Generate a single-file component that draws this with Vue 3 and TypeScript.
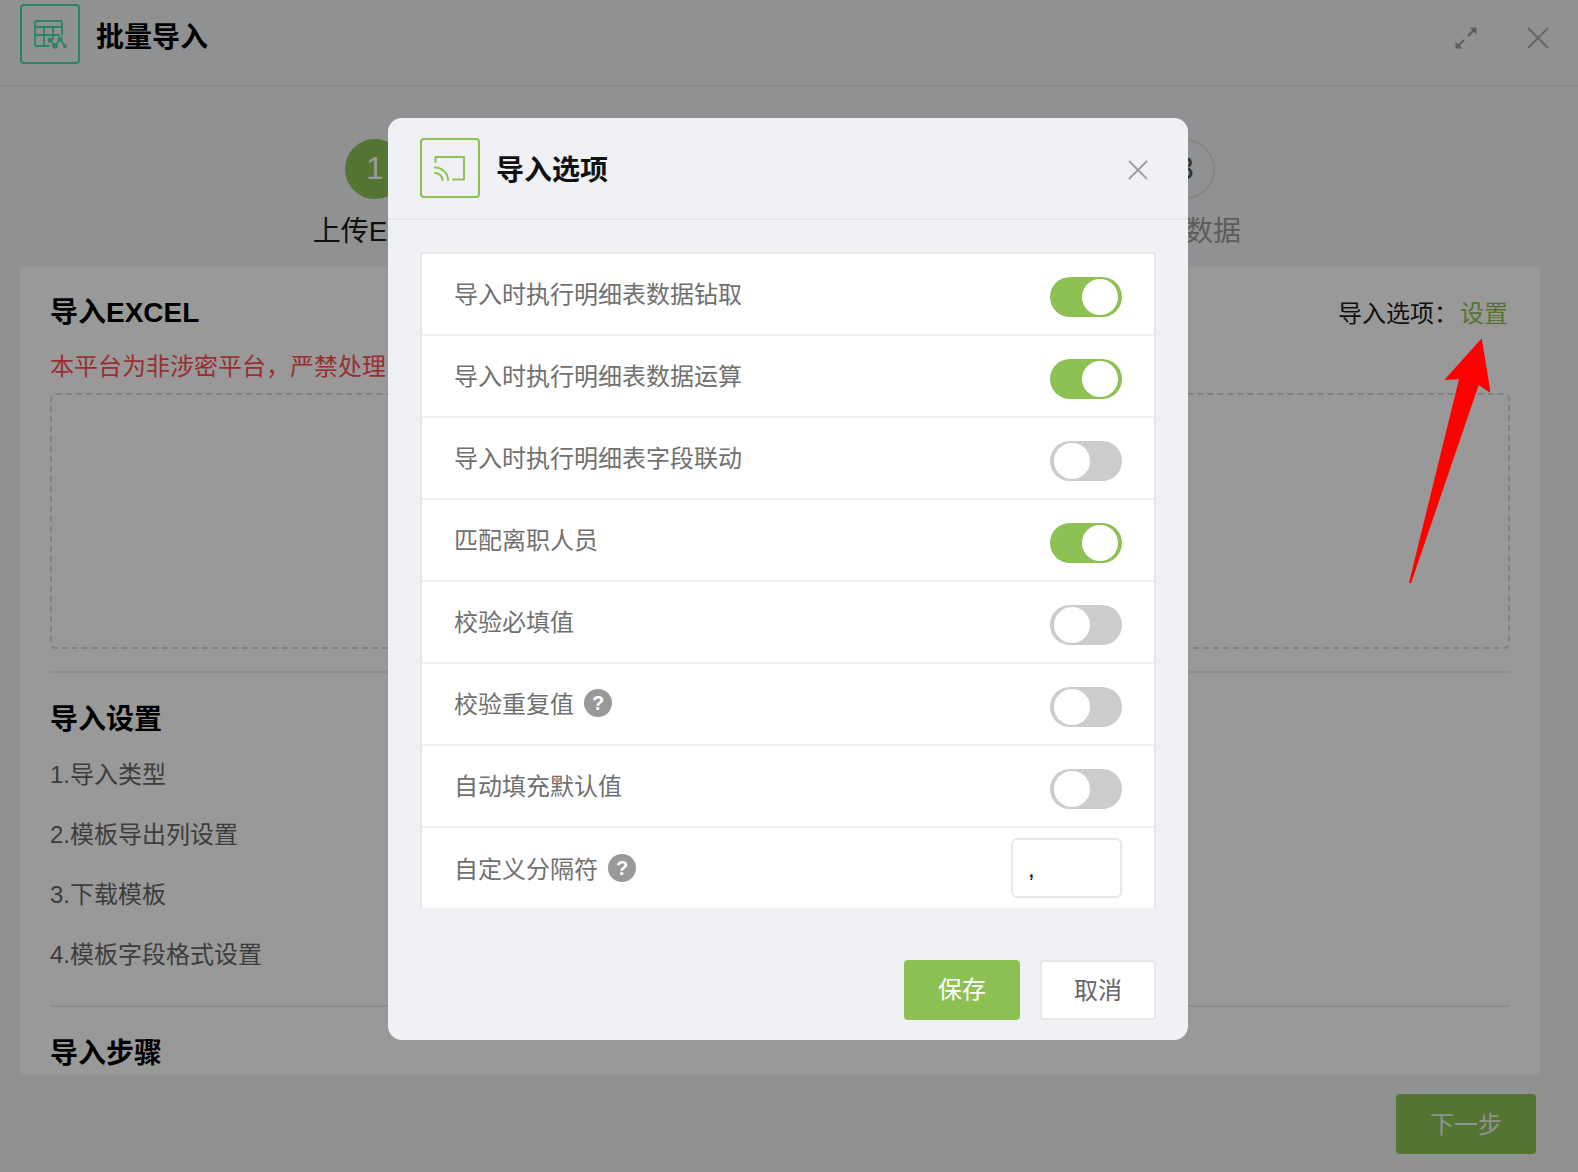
<script setup lang="ts">
interface Row { label: string; on?: boolean; help?: boolean; input?: boolean }
const rows: Row[] = [
  { label: '导入时执行明细表数据钻取', on: true },
  { label: '导入时执行明细表数据运算', on: true },
  { label: '导入时执行明细表字段联动', on: false },
  { label: '匹配离职人员', on: true },
  { label: '校验必填值', on: false },
  { label: '校验重复值', on: false, help: true },
  { label: '自动填充默认值', on: false },
  { label: '自定义分隔符', help: true, input: true },
]
const steps = ['上传Excel', '预览数据', '导入数据']
const settings = ['1.导入类型', '2.模板导出列设置', '3.下载模板', '4.模板字段格式设置']
</script>

<template>
  <div class="page">
    <header class="top">
      <div class="logo">
        <svg width="52" height="52" viewBox="0 0 52 52" fill="none" stroke="#47dba9" stroke-width="1.8" stroke-linecap="round" stroke-linejoin="round">
          <path d="M25 38H13a2 2 0 0 1-2-2V15a2 2 0 0 1 2-2h23a2 2 0 0 1 2 2v12" />
          <path d="M11 19h27M11 27h24M20 19v19M29 19v12" />
          <path d="M26 32l5 6 5-7 5 7" />
          <circle cx="26" cy="32" r="1.6" />
          <circle cx="31" cy="38" r="1.8" />
          <circle cx="36" cy="31" r="1.6" />
          <circle cx="41" cy="38" r="1" />
        </svg>
      </div>
      <h1 class="top-title">批量导入</h1>
      <div class="top-tools">
        <svg width="22" height="22" viewBox="0 0 22 22" fill="none" stroke="#9a9a9a" stroke-width="2.2">
          <path d="M3 19l6-6M13 9l6-6" />
          <path d="M.5 21.500v-7l7 7zM21.500.5v7l-7-7z" fill="#9a9a9a" stroke="none" />
        </svg>
        <svg width="22" height="22" viewBox="0 0 22 22" stroke="#a9a9a9" stroke-width="2">
          <path d="M1 1l20 20M21 1L1 21" />
        </svg>
      </div>
    </header>

    <div class="steps">
      <div v-for="(s, i) in steps" :key="s" class="step">
        <span class="dot" :class="{ active: i === 0 }">{{ i + 1 }}</span>
        <span class="step-label" :class="{ done: i === 0 }">{{ s }}</span>
      </div>
    </div>

    <section class="panel">
      <div class="panel-head">
        <h2 class="h2">导入EXCEL</h2>
        <div class="opt">导入选项：<a class="link">设置</a></div>
      </div>
      <p class="warn">本平台为非涉密平台，严禁处理</p>
      <div class="drop"></div>
      <div class="rule"></div>
      <h2 class="h2 h2-set">导入设置</h2>
      <ul class="set-list">
        <li v-for="s in settings" :key="s">{{ s }}</li>
      </ul>
      <div class="rule rule-2"></div>
      <h2 class="h2 h2-step">导入步骤</h2>
    </section>

    <footer class="foot">
      <button class="next">下一步</button>
    </footer>

    <div class="mask">
      <div class="modal">
        <div class="modal-head">
          <div class="modal-logo">
            <svg width="52" height="52" viewBox="0 0 52 52" fill="none" stroke="#8dc153" stroke-width="2" stroke-linecap="round" stroke-linejoin="round">
              <path d="M11.5 20v-5H40v22.5H29" />
              <path d="M11 25.5c7 0 13 5.500 13 12.500M11 31c4 0 7.500 3 7.500 7" />
            </svg>
          </div>
          <h3 class="modal-title">导入选项</h3>
          <svg class="modal-close" width="22" height="22" viewBox="0 0 22 22" stroke="#a0a0a0" stroke-width="2">
            <path d="M2 2l18 18M20 2L2 20" />
          </svg>
        </div>
        <div class="modal-body">
          <div class="list">
            <div v-for="r in rows" :key="r.label" class="row">
              <span class="row-label">{{ r.label }}</span>
              <span v-if="r.help" class="help">?</span>
              <span v-if="r.input" class="sep">,</span>
              <span v-else class="switch" :class="{ on: r.on }"><i class="knob"></i></span>
            </div>
          </div>
        </div>
        <div class="modal-foot">
          <button class="btn save">保存</button>
          <button class="btn cancel">取消</button>
        </div>
      </div>
      <svg class="arrow" width="90" height="250" viewBox="0 0 90 250">
        <polygon points="81.7,3.3 44.300,45 59,44.300 9,247.700 11,248.300 78.700,50 90.700,58.300" fill="#ff0000" />
      </svg>
    </div>
  </div>
</template>

<style scoped>
.page {
  position: relative;
  width: 1578px;
  height: 1172px;
  overflow: hidden;
  background: #f0f2f5;
  font-family: "Liberation Sans", "Noto Sans CJK SC", sans-serif;
  color: #1a1a1a;
}
.top {
  display: flex;
  align-items: center;
  height: 87px;
  padding: 0 20px 17px;
  box-sizing: border-box;
  border-bottom: 2px solid #e6e6e6;
}
.logo {
  width: 60px;
  height: 60px;
  box-sizing: border-box;
  border: 2px solid #47dba9;
  border-radius: 4px;
  display: flex;
  align-items: center;
  justify-content: center;
}
.top-title {
  margin: 2px 0 0 16px;
  font-size: 28px;
  font-weight: 700;
  color: #000;
}
.top-tools {
  margin-left: auto;
  display: flex;
  align-items: center;
  gap: 50px;
  padding: 7px 9px 0 0;
}
.steps {
  display: grid;
  grid-template-columns: repeat(3, 405px);
  justify-content: start;
  height: 180px;
  padding: 52px 0 0 172.5px;
  box-sizing: border-box;
}
.step {
  display: flex;
  flex-direction: column;
  align-items: center;
}
.dot {
  width: 60px;
  height: 60px;
  padding-bottom: 2px;
  box-sizing: border-box;
  border-radius: 50%;
  border: 2px solid #dcdcdc;
  display: flex;
  align-items: center;
  justify-content: center;
  font-size: 32px;
  color: #555;
}
.dot.active {
  background: #8dc153;
  border-color: #8dc153;
  color: #fff;
}
.step-label {
  margin-top: 16px;
  font-size: 28px;
  line-height: 34px;
  color: #999;
}
.step-label.done {
  color: #1a1a1a;
}
.panel {
  height: 807px;
  margin: 0 38px 0 20px;
  padding: 27px 30px 0;
  box-sizing: border-box;
  background: #fff;
  overflow: hidden;
}
.panel-head {
  display: flex;
  align-items: center;
  justify-content: space-between;
  height: 38px;
}
.h2 {
  margin: 0;
  font-size: 28px;
  line-height: 38px;
  font-weight: 700;
  color: #000;
}
.opt {
  font-size: 24px;
  padding-right: 2px;
  margin-bottom: 4px;
  color: #1a1a1a;
}
.link {
  color: #8dc153;
  margin-left: 2px;
}
.warn {
  margin: 18px 0 0;
  font-size: 24px;
  line-height: 34px;
  color: #ff4d4f;
}
.drop {
  height: 256px;
  margin-top: 9px;
  box-sizing: border-box;
  border: 2px dashed #d8d8d8;
  border-radius: 6px;
}
.rule {
  height: 2px;
  margin-top: 22px;
  background: #ebebeb;
}
.h2-set {
  margin-top: 28px;
}
.set-list {
  list-style: none;
  margin: 6px 0 0;
  padding: 0;
  font-size: 24px;
  line-height: 60px;
  color: #666;
}
.rule-2 {
  margin-top: 20px;
}
.h2-step {
  margin-top: 28px;
}
.foot {
  display: flex;
  justify-content: flex-end;
  padding: 20px 42px 0 0;
}
.next {
  width: 140px;
  height: 60px;
  padding-bottom: 4px;
  border: 0;
  border-radius: 4px;
  background: #8dc153;
  color: #f2f2f2;
  font: inherit;
  font-size: 24px;
}
.mask {
  position: absolute;
  inset: 0;
  background: rgba(0, 0, 0, 0.4);
  display: flex;
  justify-content: center;
  align-items: flex-start;
  padding: 118px 2px 0 0;
  box-sizing: border-box;
}
.modal {
  width: 800px;
  height: 922px;
  border-radius: 14px;
  background: #eff1f5;
  display: flex;
  flex-direction: column;
  overflow: hidden;
}
.modal-head {
  display: flex;
  align-items: center;
  height: 102px;
  padding: 0 32px;
  box-sizing: border-box;
  border-bottom: 2px solid #e8e8e8;
}
.modal-logo {
  width: 60px;
  height: 60px;
  box-sizing: border-box;
  border: 2px solid #8dc153;
  border-radius: 4px;
  display: flex;
  align-items: center;
  justify-content: center;
}
.modal-title {
  margin: 0 0 0 16px;
  font-size: 28px;
  font-weight: 700;
  color: #111;
}
.modal-close {
  margin: 4px 7px 0 auto;
}
.modal-body {
  padding: 32px 32px 0;
}
.list {
  box-sizing: border-box;
  height: 656px;
  border: 2px solid #e8e8e8;
  border-bottom: 0;
  background: #fff;
  overflow: hidden;
}
.row {
  display: flex;
  align-items: center;
  height: 82px;
  box-sizing: border-box;
  padding: 0 32px;
  border-bottom: 2px solid #f0f0f0;
  font-size: 24px;
  color: #707070;
}
.row:last-child {
  border-bottom: 0;
}
.row-label {
  margin-bottom: 4px;
}
.help {
  width: 28px;
  height: 28px;
  margin: 0 0 2px 10px;
  border-radius: 50%;
  background: #999;
  color: #fff;
  font-size: 20px;
  font-weight: 700;
  display: flex;
  align-items: center;
  justify-content: center;
}
.switch {
  position: relative;
  margin: 6px 0 0 auto;
  width: 72px;
  height: 40px;
  border-radius: 20px;
  background: #ccc;
}
.switch.on {
  background: #8dc153;
}
.knob {
  position: absolute;
  top: 2px;
  left: 4px;
  width: 36px;
  height: 36px;
  border-radius: 50%;
  background: #fff;
}
.switch.on .knob {
  left: 32px;
}
.sep {
  margin: 0 0 2px auto;
  width: 111px;
  height: 60px;
  box-sizing: border-box;
  border: 2px solid #e8e8e8;
  border-radius: 6px;
  padding: 14px 15px 0;
  color: #000;
  font-size: 24px;
  line-height: 30px;
}
.modal-foot {
  display: flex;
  justify-content: flex-end;
  gap: 20px;
  padding: 52px 32px 0;
}
.btn {
  width: 116px;
  height: 60px;
  padding: 0 0 4px;
  border-radius: 4px;
  font: inherit;
  font-size: 24px;
}
.save {
  border: 0;
  padding-bottom: 6px;
  background: #8dc153;
  color: #fff;
}
.cancel {
  border: 2px solid #e8e8e8;
  background: #fff;
  color: #666;
}
.arrow {
  position: absolute;
  left: 1400px;
  top: 335px;
}
</style>
